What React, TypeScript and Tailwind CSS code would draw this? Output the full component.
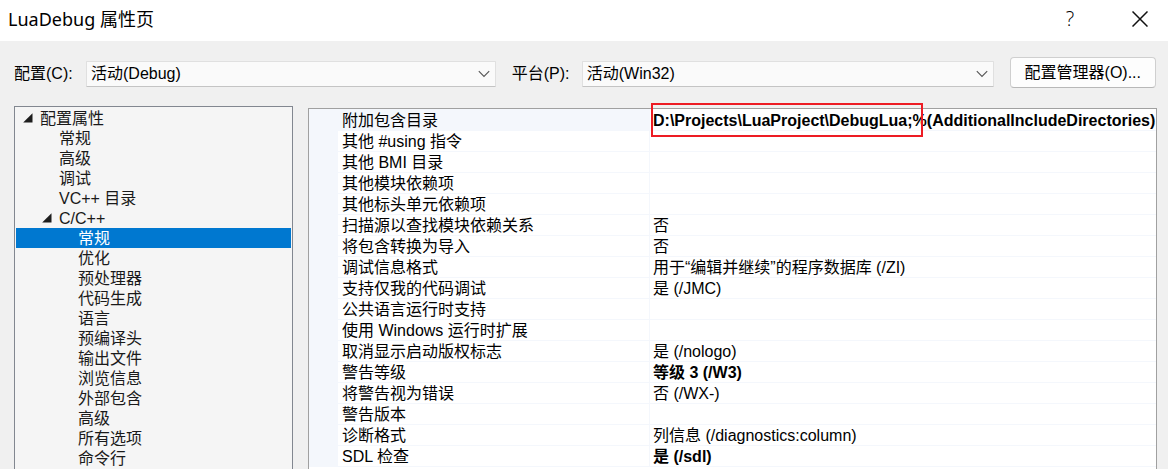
import React, { useState } from "react";

type Property = { name: string; value: string; bold?: boolean; marked?: boolean };
type TreeNode = { id: string; label: string; level: 0 | 1 | 2; expanded?: boolean };

const properties: Property[] = [
  { name: "附加包含目录", value: "D:\\Projects\\LuaProject\\DebugLua;%(AdditionalIncludeDirectories)", bold: true, marked: true },
  { name: "其他 #using 指令", value: "" },
  { name: "其他 BMI 目录", value: "" },
  { name: "其他模块依赖项", value: "" },
  { name: "其他标头单元依赖项", value: "" },
  { name: "扫描源以查找模块依赖关系", value: "否" },
  { name: "将包含转换为导入", value: "否" },
  { name: "调试信息格式", value: "用于“编辑并继续”的程序数据库 (/ZI)" },
  { name: "支持仅我的代码调试", value: "是 (/JMC)" },
  { name: "公共语言运行时支持", value: "" },
  { name: "使用 Windows 运行时扩展", value: "" },
  { name: "取消显示启动版权标志", value: "是 (/nologo)" },
  { name: "警告等级", value: "等级 3 (/W3)", bold: true },
  { name: "将警告视为错误", value: "否 (/WX-)" },
  { name: "警告版本", value: "" },
  { name: "诊断格式", value: "列信息 (/diagnostics:column)" },
  { name: "SDL 检查", value: "是 (/sdl)", bold: true },
];

const tree: TreeNode[] = [
  { id: "root", label: "配置属性", level: 0, expanded: true },
  { id: "general", label: "常规", level: 1 },
  { id: "advanced", label: "高级", level: 1 },
  { id: "debugging", label: "调试", level: 1 },
  { id: "vc-dirs", label: "VC++ 目录", level: 1 },
  { id: "cpp", label: "C/C++", level: 1, expanded: true },
  { id: "cpp-general", label: "常规", level: 2 },
  { id: "cpp-optimization", label: "优化", level: 2 },
  { id: "cpp-preprocessor", label: "预处理器", level: 2 },
  { id: "cpp-codegen", label: "代码生成", level: 2 },
  { id: "cpp-language", label: "语言", level: 2 },
  { id: "cpp-pch", label: "预编译头", level: 2 },
  { id: "cpp-output", label: "输出文件", level: 2 },
  { id: "cpp-browse", label: "浏览信息", level: 2 },
  { id: "cpp-external", label: "外部包含", level: 2 },
  { id: "cpp-advanced", label: "高级", level: 2 },
  { id: "cpp-all", label: "所有选项", level: 2 },
  { id: "cpp-cmd", label: "命令行", level: 2 },
];

const indent = { 0: "pl-[5px]", 1: "pl-6", 2: "pl-[43px]" };

function Dropdown({ id, value }: { id: string; value: string }) {
  return (
    <div className="relative min-w-0 flex-1">
      <select
        id={id}
        defaultValue={value}
        className="block h-[26px] w-full appearance-none rounded-[1px] border border-[#e0e0e0] border-b-[#c4c4c4] bg-[#fafafa] pl-1 pr-8 leading-6 text-black"
      >
        <option value={value}>{value}</option>
      </select>
      <svg
        className="pointer-events-none absolute right-1.5 top-2 h-2.5 w-3"
        viewBox="0 0 12 10"
        fill="none"
        stroke="#555"
        strokeWidth="1.1"
        aria-hidden="true"
      >
        <path d="M0.8 2.2 6 7.4l5.2-5.2" />
      </svg>
    </div>
  );
}

function PropertyTree() {
  const [selected, setSelected] = useState("cpp-general");
  return (
    <nav className="w-[279px] shrink-0 border border-b-0 border-[#828790] bg-[#f5f5f5] p-px">
      <ul>
        {tree.map((node) => (
          <li key={node.id}>
            <button
              type="button"
              onClick={() => setSelected(node.id)}
              className={`flex h-5 w-full items-center pt-0.5 text-left leading-5 ${indent[node.level]} ${
                selected === node.id ? "bg-[#0078d0] text-white" : "text-[#1a1a1a]"
              }`}
            >
              <span className="w-[19px] shrink-0 pb-0.5 pl-0.5">
                {node.expanded && (
                  <svg width="10" height="10" viewBox="0 0 10 10" aria-hidden="true">
                    <path d="M9.5 0.2V9.5H0.2Z" fill="#1e1e1e" />
                  </svg>
                )}
              </span>
              {node.label}
            </button>
          </li>
        ))}
      </ul>
    </nav>
  );
}

function PropertyGrid() {
  return (
    <div className="min-w-0 flex-1 pt-0.5">
      <div className="h-full border border-b-0 border-[#a0a0a0] bg-white">
        <table className="w-full table-fixed border-separate border-spacing-0 text-left text-black">
          <colgroup>
            <col className="w-[29px]" />
            <col className="w-[312px]" />
            <col />
          </colgroup>
          <tbody>
            {properties.map((p, i) => (
              <tr key={p.name} className="h-[21px] first:h-[22px]">
                <td className="bg-[#f4f7fc] p-0" />
                <th
                  scope="row"
                  className={`whitespace-nowrap border-b border-r border-[#f4f7fc] p-0 pl-1 align-bottom font-normal leading-[19px] ${
                    i === 0 ? "bg-[#f4f7fc]" : ""
                  }`}
                >
                  {p.name}
                </th>
                <td
                  className={`relative whitespace-nowrap border-b border-[#f4f7fc] p-0 pl-[3px] align-bottom leading-[19px] ${
                    p.bold ? "font-bold" : ""
                  }`}
                >
                  {p.value}
                  {p.marked && (
                    <span className="pointer-events-none absolute -top-1.5 left-px h-[34px] w-[272px] border-2 border-[#ed1c24]" />
                  )}
                </td>
              </tr>
            ))}
          </tbody>
        </table>
      </div>
    </div>
  );
}

export default function App() {
  return (
    <div className="flex h-screen flex-col overflow-hidden bg-[#f0f0f0] font-['Liberation_Sans','Noto_Sans_CJK_SC',sans-serif] text-base text-black">
      <header className="flex h-[41px] shrink-0 items-center bg-white pb-1 pl-2 pr-4">
        <h1 className="flex-1 font-['Noto_Sans','Noto_Sans_CJK_SC',sans-serif] text-lg font-normal leading-6">
          LuaDebug 属性页
        </h1>
        <button
          type="button"
          aria-label="帮助"
          className="mr-[42px] flex h-8 w-8 items-center justify-center font-['Open_Sans',sans-serif] text-xl font-light"
        >
          ?
        </button>
        <button type="button" aria-label="关闭" className="flex h-8 w-6 items-center justify-center">
          <svg width="16" height="16" viewBox="0 0 16 16" stroke="#111" strokeWidth="1.5" aria-hidden="true">
            <path d="M0.5 0.5l15 15M15.5 0.5l-15 15" />
          </svg>
        </button>
      </header>

      <main className="flex min-h-0 flex-1 flex-col pl-3.5 pr-[11px]">
        <div className="flex shrink-0 items-start gap-4 pb-[18px] pr-px pt-4">
          <div className="flex min-w-0 flex-1 items-center pt-1">
            <label htmlFor="configuration" className="w-[72px] shrink-0">
              配置(C):
            </label>
            <Dropdown id="configuration" value="活动(Debug)" />
          </div>
          <div className="flex min-w-0 flex-1 items-center pt-1">
            <label htmlFor="platform" className="w-[70px] shrink-0">
              平台(P):
            </label>
            <Dropdown id="platform" value="活动(Win32)" />
          </div>
          <button
            type="button"
            className="h-[31px] shrink-0 rounded border border-[#cfcfcf] border-b-[#b8b8b8] bg-[#fdfdfd] px-3.5 leading-6"
          >
            配置管理器(O)...
          </button>
        </div>

        <div className="flex min-h-0 flex-1 gap-[15px]">
          <PropertyTree />
          <PropertyGrid />
        </div>
      </main>
    </div>
  );
}
